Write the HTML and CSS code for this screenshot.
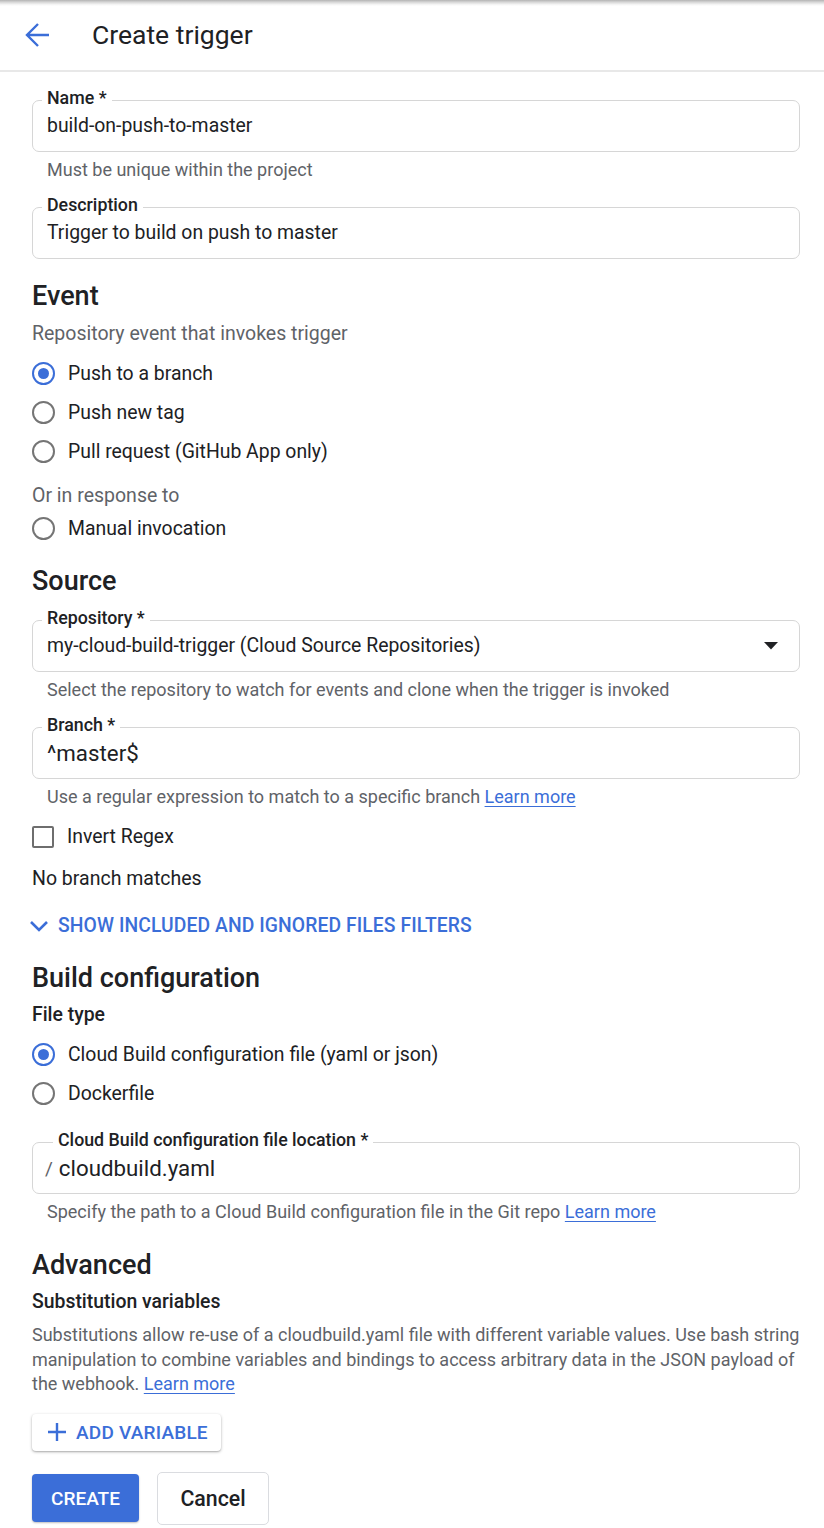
FILE: index.html
```html
<!DOCTYPE html>
<html lang="en">
<head>
<meta charset="utf-8">
<title>Create trigger</title>
<link rel="stylesheet" href="styles.css">
</head>
<body>
<div class="topshade"></div>
<header class="appbar">
  <svg class="back" width="26" height="26" viewBox="0 0 26 26"><path d="M24 13H3M13 2L2 13l11 11" fill="none" stroke="#3b6ed8" stroke-width="2.4"/></svg>
  <h1 class="title">Create trigger</h1>
</header>

<main class="form">
  <div class="field f-name">
    <span class="flabel">Name *</span>
    <span class="fvalue">build-on-push-to-master</span>
  </div>
  <div class="hint">Must be unique within the project</div>

  <div class="field f-next">
    <span class="flabel">Description</span>
    <span class="fvalue">Trigger to build on push to master</span>
  </div>

  <h2 class="section s-event">Event</h2>
  <div class="subtext">Repository event that invokes trigger</div>
  <div class="options first">
    <div class="opt"><span class="radio on"></span><span>Push to a branch</span></div>
    <div class="opt"><span class="radio"></span><span>Push new tag</span></div>
    <div class="opt"><span class="radio"></span><span>Pull request (GitHub App only)</span></div>
  </div>
  <div class="subtext or">Or in response to</div>
  <div class="options second">
    <div class="opt"><span class="radio"></span><span>Manual invocation</span></div>
  </div>

  <h2 class="section s-source">Source</h2>
  <div class="field f-first">
    <span class="flabel">Repository *</span>
    <span class="fvalue grow">my-cloud-build-trigger (Cloud Source Repositories)</span>
    <svg class="caret" width="14" height="8" viewBox="0 0 14 8"><path d="M0 0h14L7 7.5z" fill="#202124"/></svg>
  </div>
  <div class="hint">Select the repository to watch for events and clone when the trigger is invoked</div>

  <div class="field f-next">
    <span class="flabel">Branch *</span>
    <span class="fvalue big">^master$</span>
  </div>
  <div class="hint">Use a regular expression to match to a specific branch <a class="link" href="#">Learn more</a></div>

  <div class="opt check-row"><span class="checkbox"></span><span>Invert Regex</span></div>
  <div class="plain">No branch matches</div>

  <div class="toggle">
    <svg class="chev" width="20" height="12" viewBox="0 0 20 12"><path d="M2 2l8 8 8-8" fill="none" stroke="#3b6ed8" stroke-width="2.6"/></svg>
    <span>SHOW INCLUDED AND IGNORED FILES FILTERS</span>
  </div>

  <h2 class="section s-build">Build configuration</h2>
  <div class="minor">File type</div>
  <div class="options first">
    <div class="opt"><span class="radio on"></span><span>Cloud Build configuration file (yaml or json)</span></div>
    <div class="opt"><span class="radio"></span><span>Dockerfile</span></div>
  </div>

  <div class="field f-loc">
    <span class="flabel loc">Cloud Build configuration file location *</span>
    <span class="prefix">/</span>
    <span class="fvalue big">cloudbuild.yaml</span>
  </div>
  <div class="hint">Specify the path to a Cloud Build configuration file in the Git repo <a class="link" href="#">Learn more</a></div>

  <h2 class="section s-adv">Advanced</h2>
  <div class="minor">Substitution variables</div>
  <p class="para">Substitutions allow re-use of a cloudbuild.yaml file with different variable values. Use bash string manipulation to combine variables and bindings to access arbitrary data in the JSON payload of the webhook. <a class="link" href="#">Learn more</a></p>

  <button class="addvar" type="button">
    <svg width="20" height="20" viewBox="0 0 20 20"><path d="M10 1v18M1 10h18" stroke="#3b6ed8" stroke-width="2.4" fill="none"/></svg>
    <span>ADD VARIABLE</span>
  </button>

  <div class="actions">
    <button class="btn-create" type="button">CREATE</button>
    <button class="btn-cancel" type="button">Cancel</button>
  </div>
</main>
</body>
</html>
```

FILE: styles.css
```css
* { box-sizing: border-box; }
html, body { margin: 0; padding: 0; background: #fff; }
body {
  font-family: Roboto, "Noto Sans", "Liberation Sans", sans-serif;
  color: #202124;
  width: 824px;
  height: 1528px;
  overflow: hidden;
}
.topshade {
  height: 6px;
  background: linear-gradient(#b3b3b3, #d6d6d6 35%, #f4f4f4 75%, #fff);
}
.appbar {
  height: 66px;
  display: flex;
  align-items: center;
  border-bottom: 2px solid #e8e8e8;
  padding-left: 25px;
  padding-bottom: 6px;
}
.back { width: 26px; height: 26px; flex: none; }
.title {
  margin: 0 0 0 41px;
  font-size: 26.5px;
  font-weight: 400;
  line-height: 32px;
  color: #202124;
}
.form {
  padding: 0 24px 0 32px;
}
.field {
  position: relative;
  height: 52px;
  border: 1px solid #d6d6d6;
  border-radius: 7px;
  display: flex;
  align-items: center;
  padding: 0 14px;
}
.f-name { margin-top: 28px; }
.f-next { margin-top: 27px; }
.f-first { margin-top: 23px; }
.f-loc { margin-top: 29px; }
.flabel {
  position: absolute;
  top: -13px;
  left: 9px;
  padding: 0 5px;
  background: #fff;
  font-size: 17.8px;
  font-weight: 500;
  line-height: 20px;
  color: #202124;
}
.flabel.loc { left: 20px; }
.fvalue {
  font-size: 19.4px;
  line-height: 24px;
  color: #202124;
}
.fvalue.big { font-size: 22.3px; }
.fvalue.grow { flex: 1; }
.prefix {
  font-size: 19px;
  color: #5f6368;
  margin: 0 6px 0 -2px;
}
.caret { margin-right: 7px; }
.hint {
  margin-top: 8px;
  padding-left: 15px;
  font-size: 18px;
  line-height: 20px;
  color: #5f6368;
}
.link {
  color: #3b6ed8;
  text-decoration: underline;
  text-underline-offset: 3px;
}
.section {
  margin: 0;
  font-size: 27px;
  font-weight: 500;
  line-height: 32px;
  color: #202124;
}
.s-event { margin-top: 21px; }
.s-source { margin-top: 17px; }
.s-build { margin-top: 24px; }
.s-adv { margin-top: 27px; }
.subtext {
  margin-top: 10px;
  font-size: 19.5px;
  line-height: 24px;
  color: #5f6368;
}
.subtext.or { margin-top: 13px; }
.options.first { margin-top: 8px; }
.options.second { margin-top: 1px; }
.opt {
  height: 39px;
  display: flex;
  align-items: center;
  gap: 13px;
  font-size: 19.4px;
  color: #202124;
}
.radio {
  width: 23px;
  height: 23px;
  border: 2px solid #757575;
  border-radius: 50%;
  display: flex;
  align-items: center;
  justify-content: center;
  flex: none;
}
.radio.on { border-color: #3b6ed8; }
.radio.on::after {
  content: "";
  width: 11px;
  height: 11px;
  border-radius: 50%;
  background: #3b6ed8;
}
.check-row { margin-top: 10px; }
.checkbox {
  width: 22px;
  height: 22px;
  border: 2px solid #6e6e6e;
  border-radius: 2px;
  flex: none;
}
.plain {
  margin-top: 11px;
  font-size: 19.5px;
  line-height: 24px;
  color: #202124;
}
.toggle {
  margin-top: 23px;
  margin-left: -3px;
  display: flex;
  align-items: center;
  gap: 9px;
  font-size: 19.3px;
  font-weight: 500;
  line-height: 24px;
  color: #3b6ed8;
  letter-spacing: 0.1px;
}
.minor {
  margin-top: 9px;
  font-size: 19.4px;
  font-weight: 500;
  line-height: 24px;
  color: #202124;
}
.para {
  margin: 9px 0 0;
  font-size: 18px;
  line-height: 24.5px;
  color: #5f6368;
}
.addvar {
  margin-top: 17px;
  height: 37px;
  padding: 0 13px 0 15px;
  display: flex;
  align-items: center;
  gap: 9px;
  background: #fff;
  border: none;
  border-radius: 4px;
  box-shadow: 0 1px 3px rgba(0,0,0,0.3), 0 1px 1px rgba(0,0,0,0.08);
  font-family: inherit;
  font-size: 19px;
  font-weight: 500;
  color: #3b6ed8;
  letter-spacing: 0.2px;
}
.actions {
  margin-top: 21px;
  display: flex;
  align-items: center;
  gap: 18px;
}
.btn-create {
  width: 107px;
  height: 48px;
  border: none;
  border-radius: 4px;
  background: #3b6ed8;
  color: #fff;
  font-family: inherit;
  font-size: 19px;
  font-weight: 500;
  box-shadow: 0 1px 2px rgba(0,0,0,0.25);
}
.btn-cancel {
  width: 112px;
  height: 53px;
  border: 1px solid #dadce0;
  border-radius: 5px;
  background: #fff;
  color: #202124;
  font-family: inherit;
  font-size: 21.3px;
  font-weight: 500;
}
```
